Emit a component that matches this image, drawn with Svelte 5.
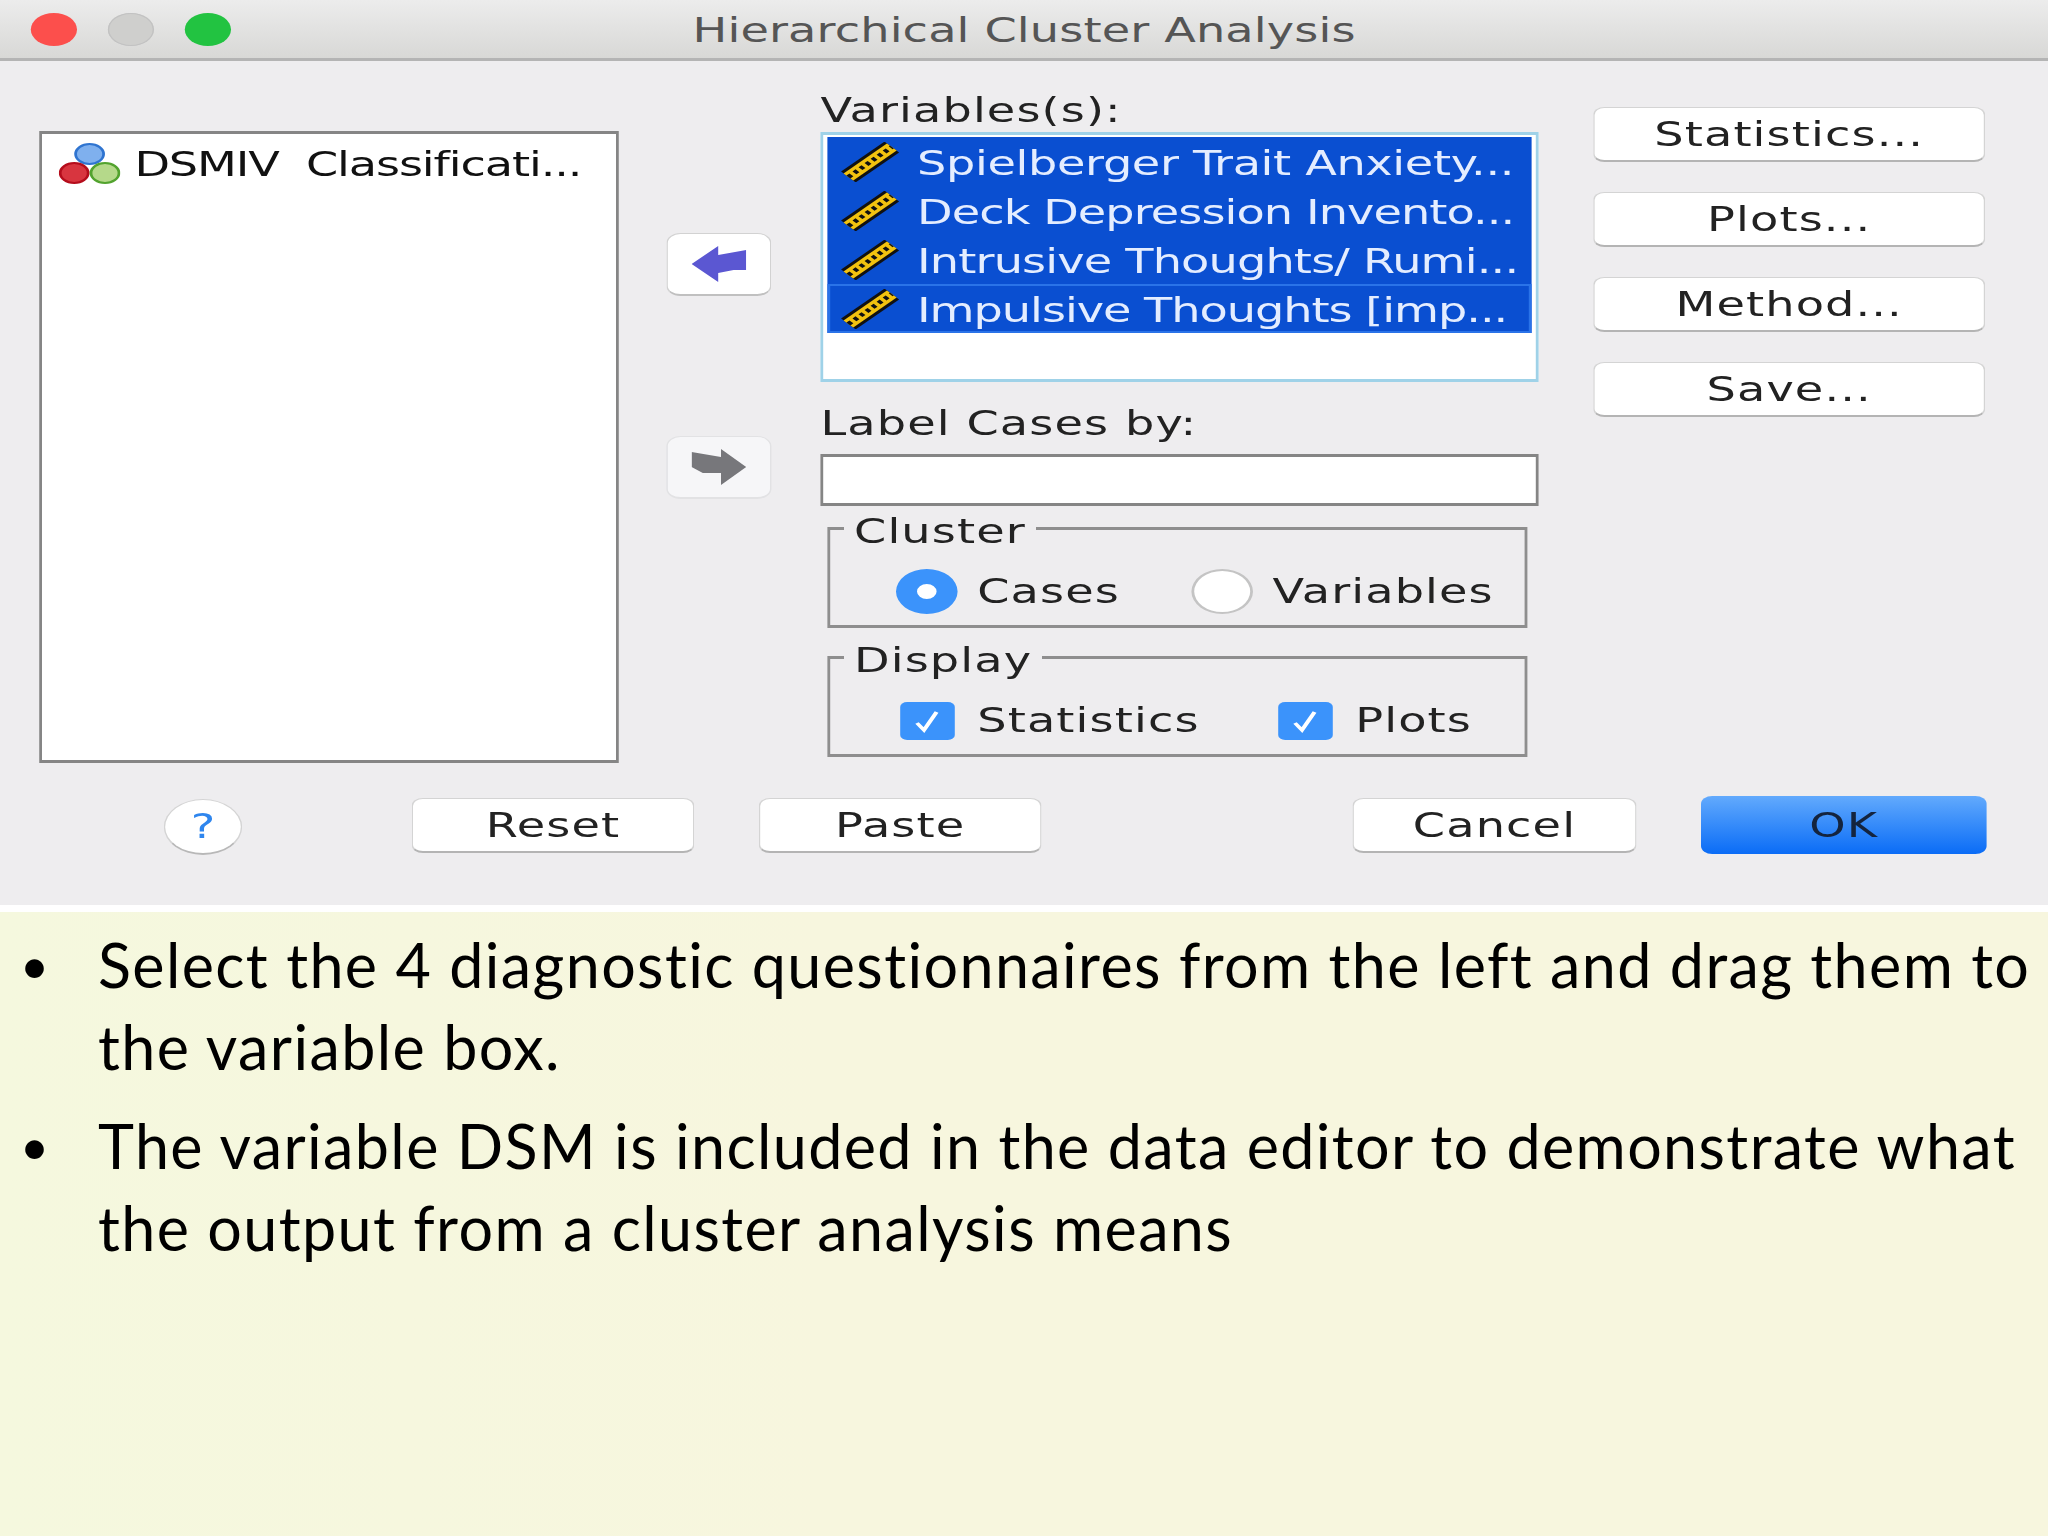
<script>
  // the source slide stretched the dialog sideways, so it is laid out narrow and scaled by 1.4
  const vars = [
    { name: 'Spielberger Trait Anxiety...', tracking: -0.25 },
    { name: 'Deck Depression Invento...', tracking: -0.66 },
    { name: 'Intrusive Thoughts/ Rumi...', tracking: -0.6 },
    { name: 'Impulsive Thoughts [imp...', tracking: -0.74, focus: true }
  ];
  const sideButtons = ['Statistics...', 'Plots...', 'Method...', 'Save...'];
  const notes = [
    'Select the 4 diagnostic questionnaires from the left and drag them to the variable box.',
    'The variable DSM is included in the data editor to demonstrate what the output from a cluster analysis means'
  ];
</script>

<div class="page">
  <div class="window">
    <div class="dialog">
      <div class="titlebar">
        <div class="lights">
          <span class="light red"></span>
          <span class="light grey"></span>
          <span class="light green"></span>
        </div>
        <div class="title">Hierarchical Cluster Analysis</div>
      </div>

      <div class="main">
        <div class="source">
          <div class="source-row">
            <svg class="nominal" viewBox="0 0 44 41" aria-hidden="true">
              <circle cx="22" cy="11" r="10" fill="#7fb0ee" stroke="#2f74d0" stroke-width="2" />
              <circle cx="11" cy="30" r="10" fill="#d8353f" stroke="#b50d1c" stroke-width="2" />
              <circle cx="33" cy="30" r="10" fill="#b5d98a" stroke="#52a32e" stroke-width="2" />
            </svg>
            <span class="name">DSMIV&nbsp; Classificati...</span>
          </div>
        </div>

        <div class="arrows">
          <button class="arrow" aria-label="Move left">
            <svg viewBox="0 0 39 36"><path d="M0 18 19 0V9L39 4V24H30L19 27V36Z" fill="#5b57d2" /></svg>
          </button>
          <button class="arrow off" aria-label="Move right">
            <svg viewBox="0 0 39 36"><path d="M39 18 21 0V8L0 3V18L8 24H21V36Z" fill="#77777b" /></svg>
          </button>
        </div>

        <div class="center">
          <div class="label">Variables(s):</div>
          <div class="varbox">
            {#each vars as v}
              <div class="var" class:focus={v.focus} style="letter-spacing: {v.tracking}px">
                <svg class="ruler" viewBox="0 0 43 40" aria-hidden="true">
                  <line x1="6" y1="35" x2="37" y2="5" stroke="#111" stroke-width="15" />
                  <line x1="6" y1="35" x2="37" y2="5" stroke="#f2c20f" stroke-width="10" />
                  <line x1="6" y1="35" x2="37" y2="5" stroke="#111" stroke-width="4" stroke-dasharray="3 3" />
                </svg>
                <span class="name">{v.name}</span>
              </div>
            {/each}
          </div>

          <div class="label second">Label Cases by:</div>
          <div class="field"></div>

          <fieldset class="group">
            <legend>Cluster</legend>
            <div class="opts">
              <div class="opt wide-a">
                <span class="mark"><span class="radio on"></span></span>
                Cases
              </div>
              <div class="opt">
                <span class="mark"><span class="radio"></span></span>
                Variables
              </div>
            </div>
          </fieldset>

          <fieldset class="group last">
            <legend>Display</legend>
            <div class="opts">
              <div class="opt wide-b">
                <span class="mark">
                  <span class="check"><svg viewBox="0 0 39 38"><path d="M12 21 17 28 26 10" fill="none" stroke="#fff" stroke-width="3" /></svg></span>
                </span>
                Statistics
              </div>
              <div class="opt">
                <span class="mark">
                  <span class="check"><svg viewBox="0 0 39 38"><path d="M12 21 17 28 26 10" fill="none" stroke="#fff" stroke-width="3" /></svg></span>
                </span>
                Plots
              </div>
            </div>
          </fieldset>
        </div>

        <div class="side">
          {#each sideButtons as b}
            <button class="btn">{b}</button>
          {/each}
        </div>
      </div>

      <div class="footer">
        <button class="help">?</button>
        <button class="btn reset">Reset</button>
        <button class="btn paste">Paste</button>
        <button class="btn cancel">Cancel</button>
        <button class="btn ok">OK</button>
      </div>
    </div>
  </div>

  <ul class="notes">
    {#each notes as n}
      <li><span class="dot">•</span><span>{n}</span></li>
    {/each}
  </ul>
</div>

<style>
  :global(body) {
    margin: 0;
  }

  .page {
    width: 2048px;
    height: 1536px;
    overflow: hidden;
    background: linear-gradient(90deg, #f5f8de, #f7f6de 40%);
  }

  .window {
    height: 905px;
    background: #eeedef;
    border-bottom: 7px solid #fff;
  }

  .dialog {
    width: 1463px;
    transform: scaleX(1.4);
    transform-origin: left top;
    font-family: "DejaVu Sans", sans-serif;
    font-size: 33px;
    letter-spacing: 0.8px;
    color: #222;
  }

  .titlebar {
    height: 58px;
    display: flex;
    align-items: center;
    position: relative;
    justify-content: center;
    background: linear-gradient(#ececec, #d8d8d6);
    border-bottom: 3px solid #b4b4b4;
  }

  .lights {
    position: absolute;
    left: 22px;
    top: 13px;
    display: flex;
    gap: 22px;
  }

  .light {
    width: 33px;
    height: 33px;
    border-radius: 50%;
  }

  .red { background: #fc4f4c; }
  .grey { background: #cfcfcd; box-shadow: inset 0 0 0 1px #c2c2c2; }
  .green { background: #22c341; }

  .title {
    font-size: 33px;
    letter-spacing: 0.1px;
    color: #555;
    padding-top: 2px;
  }

  .main {
    display: flex;
    height: 702px;
    padding-left: 28px;
    box-sizing: border-box;
  }

  .source {
    width: 414px;
    height: 632px;
    margin-top: 70px;
    box-sizing: border-box;
    background: #fff;
    border: 2px solid #858585;
    border-width: 3px 2px;
    padding: 7px 0 0 12px;
  }

  .source-row {
    display: flex;
    align-items: center;
    gap: 10px;
    color: #111;
    line-height: 41px;
    white-space: nowrap;
    letter-spacing: -0.8px;
  }

  .name {
    padding-top: 3px;
  }

  .nominal {
    width: 44px;
    height: 41px;
    flex: none;
  }

  .arrows {
    width: 75px;
    margin: 172px 35px 0 34px;
    display: flex;
    flex-direction: column;
    gap: 140px;
  }

  .arrow {
    height: 63px;
    padding: 0;
    background: #fff;
    border: 1px solid #d2d2d2;
    border-bottom: 2px solid #c0c0c0;
    border-radius: 10px;
    display: flex;
    align-items: center;
    justify-content: center;
  }

  .arrow svg {
    width: 39px;
    height: 36px;
  }

  .arrow.off {
    background: #f6f6f8;
    border-color: #e2e2e4;
  }

  .center {
    width: 513px;
    margin-right: 39px;
    padding-top: 32px;
  }

  .label {
    height: 34px;
    line-height: 34px;
    margin-bottom: 5px;
    padding-top: 1px;
    box-sizing: border-box;
  }

  .label.second {
    margin: 24px 0 14px;
  }

  .varbox {
    height: 250px;
    box-sizing: border-box;
    background: #fff;
    border: 2px solid #9fd2e8;
    border-width: 3px 2px;
    padding: 2px 3px;
  }

  .var {
    height: 49px;
    display: flex;
    align-items: center;
    gap: 12px;
    padding-left: 9px;
    background: #0a4fd1;
    color: #e4edff;
    box-sizing: border-box;
    white-space: nowrap;
  }

  .var.focus {
    border: 2px solid #2a73e8;
    padding-left: 7px;
  }

  .ruler {
    width: 43px;
    height: 40px;
    flex: none;
  }

  .field {
    height: 52px;
    box-sizing: border-box;
    background: #fff;
    border: 2px solid #858585;
    border-width: 3px 2px;
  }

  .group {
    width: 500px;
    height: 115px;
    box-sizing: border-box;
    margin: 7px 0 0 5px;
    padding: 0;
    border: 2px solid #8e8e8e;
    border-width: 3px 2px;
  }

  .group.last {
    margin-top: 14px;
  }

  .group legend {
    margin-left: 10px;
    padding: 0 7px;
    line-height: 30px;
    position: relative;
    top: 4px;
  }

  .opts {
    display: flex;
    padding: 26px 0 0 47px;
  }

  .opt {
    display: flex;
    align-items: center;
    gap: 14px;
    height: 45px;
  }

  .wide-a { width: 211px; }
  .wide-b { width: 270px; }

  .mark {
    width: 44px;
    display: flex;
    justify-content: center;
  }

  .radio {
    width: 44px;
    height: 45px;
    box-sizing: border-box;
    border-radius: 50%;
    background: #fff;
    border: 2px solid #c4c4c4;
  }

  .radio.on {
    border: 15px solid #3b93fb;
  }

  .check {
    width: 39px;
    height: 38px;
    border-radius: 5px;
    background: #3b93fb;
    display: flex;
  }

  .side {
    width: 280px;
    padding-top: 46px;
    display: flex;
    flex-direction: column;
    gap: 30px;
  }

  .btn {
    height: 55px;
    padding: 1px 0 0;
    font: inherit;
    letter-spacing: inherit;
    color: inherit;
    background: #fff;
    border: 1px solid #d4d4d4;
    border-bottom: 2px solid #b4b4b4;
    border-radius: 8px;
  }

  .footer {
    display: flex;
    align-items: center;
    height: 144px;
    padding: 0 0 20px 117px;
    box-sizing: border-box;
  }

  .help {
    width: 56px;
    height: 56px;
    padding: 0;
    margin: 4px 121px 0 0;
    font: inherit;
    color: #2f86ee;
    background: #fff;
    border: 1px solid #d4d4d4;
    border-bottom: 2px solid #b8b8b8;
    border-radius: 50%;
  }

  .reset { width: 202px; margin-right: 46px; }
  .paste { width: 202px; margin-right: 222px; }
  .cancel { width: 203px; margin-right: 46px; }

  .ok {
    width: 204px;
    height: 58px;
    border: none;
    color: #14243e;
    background: linear-gradient(#62aafd, #0a6cf6);
  }

  .notes {
    list-style: none;
    margin: 0;
    padding: 12px 0 0 20px;
    font-family: Lato, sans-serif;
    font-size: 61px;
    letter-spacing: 1.4px;
    line-height: 82px;
    color: #000;
  }

  .notes li {
    display: flex;
    margin-bottom: 17px;
  }

  .dot {
    width: 78px;
    flex: none;
    font-size: 50px;
  }
</style>
